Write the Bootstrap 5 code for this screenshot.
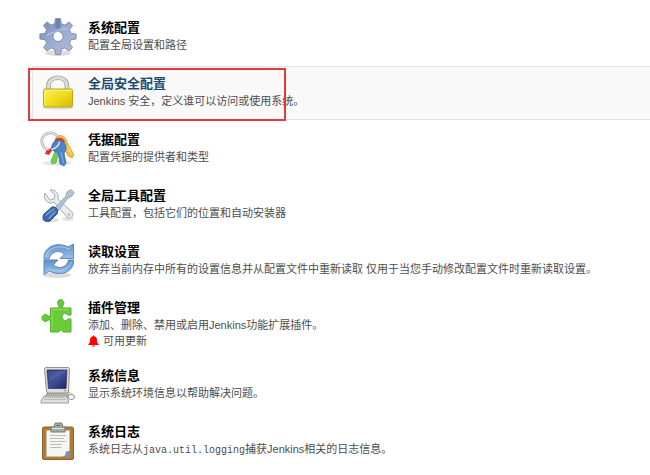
<!DOCTYPE html>
<html lang="zh-CN">
<head>
<meta charset="utf-8">
<meta name="viewport" content="width=device-width, initial-scale=1">
<title>Jenkins 系统管理</title>
<link href="https://cdn.jsdelivr.net/npm/bootstrap@5.3.0/dist/css/bootstrap.min.css" rel="stylesheet">
<style>
body{font-family:"Liberation Sans","Noto Sans CJK SC",sans-serif;font-size:11px;line-height:16px;color:#4d4d4d;background:#fff;overflow-x:hidden}
.manage-list{padding:9px 0 0 32px}
.manage-item{gap:11px;margin:1px 0;padding:7px 6px 6px;border:1px solid transparent;border-right:0;color:inherit}
.manage-item.is-current{background:#f9f9f9;border-color:#e3e3e3}
.manage-icon{width:38px;height:39px}
.manage-text{padding-top:1px}
.manage-title{font-size:13px;line-height:18px;color:#000}
.is-current .manage-title{color:#204a74}
.manage-text code{font-family:"Liberation Mono",monospace;font-size:10px;line-height:12px;color:inherit}
.bell{width:11px;height:12px}
.update-note{gap:4px}
.highlight-frame{left:-5px;top:1px;width:258px;height:53px;border:2px solid #e23b3b;pointer-events:none}
</style>
<script src="https://cdn.jsdelivr.net/npm/bootstrap@5.3.0/dist/js/bootstrap.bundle.min.js"></script>
</head>
<body>
<main class="manage-list d-flex flex-column">

<a href="#configure" class="manage-item d-flex align-items-start text-decoration-none">
<svg class="manage-icon flex-shrink-0" viewBox="0 0 38 39" aria-hidden="true">
<defs><linearGradient id="gearFill" x1="0" y1="0" x2="1" y2="1"><stop offset="0" stop-color="#7088b4"/><stop offset=".5" stop-color="#9eacd3"/><stop offset="1" stop-color="#b4bad9"/></linearGradient></defs>
<ellipse cx="19" cy="35" rx="13" ry="3" fill="#ddd"/>
<path transform="translate(19 18.5)" fill="url(#gearFill)" fill-rule="evenodd" stroke="#7f89a8" stroke-width=".9" stroke-linejoin="round" d="M-3.2-12.9-2.5-18.1H2.5L3.2-12.9 6.9-11.4 11-14.6 14.6-11 11.4-6.9 12.9-3.2 18.1-2.5V2.5L12.9 3.2 11.4 6.9 14.6 11 11 14.6 6.9 11.4 3.2 12.9 2.5 18.1H-2.5L-3.2 12.9-6.9 11.4-11 14.6-14.6 11-11.4 6.9-12.9 3.2-18.1 2.5V-2.5L-12.9-3.2-11.4-6.9-14.6-11-11-14.6-6.9-11.4ZM0-5A5 5 0 1 0 0 5 5 5 0 1 0 0-5Z"/>
<path d="M17 1h4l1 9c-2 1-4 1-6 0z" fill="#56739f" opacity=".6"/>
<path d="M8 18c3-5 7-2 11-5s7-3 10-1" fill="none" stroke="#c6cee9" stroke-width="1.5" opacity=".6"/>
</svg>
<div class="manage-text"><div class="manage-title fw-bold">系统配置</div><div>配置全局设置和路径</div></div>
</a>

<a href="#security" class="manage-item is-current position-relative d-flex align-items-start text-decoration-none">
<svg class="manage-icon flex-shrink-0" viewBox="0 0 38 39" aria-hidden="true">
<defs><linearGradient id="lockFill" x1="0" y1="0" x2="1" y2="1"><stop offset="0" stop-color="#f8ee58"/><stop offset=".5" stop-color="#f0dc1d"/><stop offset="1" stop-color="#d6b800"/></linearGradient></defs>
<ellipse cx="19" cy="33.5" rx="15" ry="2" fill="#ddd"/>
<path d="M9.5 18V12C9.5 1 28 1 28 12v6" fill="none" stroke="#9b9e9b" stroke-width="4.600"/>
<path d="M9.5 18V12C9.5 1 28 1 28 12v6" fill="none" stroke="#dcdedc" stroke-width="2.800"/>
<rect x="4.500" y="15" width="29" height="18" rx="1.5" fill="url(#lockFill)" stroke="#bda51c"/>
<path d="M6 31.5V16.5h26" fill="none" stroke="#fff27a"/>
</svg>
<div class="manage-text"><div class="manage-title fw-bold">全局安全配置</div><div>Jenkins 安全，定义谁可以访问或使用系统。</div></div>
<span class="highlight-frame position-absolute"></span>
</a>

<a href="#credentials" class="manage-item d-flex align-items-start text-decoration-none">
<svg class="manage-icon flex-shrink-0" viewBox="0 0 38 39" aria-hidden="true">
<ellipse cx="18" cy="33" rx="14" ry="2.5" fill="#e6e6e6"/>
<circle cx="11.5" cy="11.5" r="8.7" fill="none" stroke="#a1a5a6" stroke-width="2.8"/>
<circle cx="11.5" cy="11.5" r="8.7" fill="none" stroke="#e3e5e6" stroke-width="1.5"/>
<path d="M16 9c3-6 11-4 12 3l7 13-2 3-4-2-7-12z" fill="#edc04a" stroke="#cfa03a" stroke-width=".7"/>
<path d="M15 12c1-5 9-6 11 0l-4 4-6 1-4 5-2 3-4-1 1-3 4-2z" fill="#d93630"/>
<path d="M15 14c2-5 10-4 10 1l-6 10-2 8-4 1-1-3 4-10z" fill="#74cc48" stroke="#5aaa42" stroke-width=".7"/>
<path d="M13 16c0-5 7-7 11-4 4 2 4 8 1 11l2 10-2 3-4-2-2-12c-3 1-6-2-6-6z" fill="#4b83c9" stroke="#3c6faf" stroke-width=".8"/>
<path d="M22 22l2.5 11" stroke="#8ab7e9"/><path d="M28 16l5 9" stroke="#ffe28b"/>
<path d="M12 19.5c5-1 8-4 8.5-8" fill="none" stroke="#e4e7e9" stroke-width="1.5"/>
</svg>
<div class="manage-text"><div class="manage-title fw-bold">凭据配置</div><div>配置凭据的提供者和类型</div></div>
</a>

<a href="#tools" class="manage-item d-flex align-items-start text-decoration-none">
<svg class="manage-icon flex-shrink-0" viewBox="0 0 38 39" aria-hidden="true">
<ellipse cx="11" cy="34" rx="9" ry="2" fill="#ddd"/><ellipse cx="29" cy="33" rx="6" ry="2" fill="#e4e4e4"/>
<path d="M6 7c-2 5 1 10 6 10l3-1 13 15c3 3 8-1 5-5L19 13c1-5-2-10-8-9l5 5-1 4-4 1z" fill="#e9eaea" stroke="#a9adae" stroke-width="1" stroke-linejoin="round"/>
<circle cx="30" cy="28.5" r="1.3" fill="#bbb"/>
<path d="M16 22 27 10l1-4 4-2.500 3 3L33 10l-4 2L19 25z" fill="#b0c3d6" stroke="#8b9fb4" stroke-width=".9" stroke-linejoin="round"/>
<path d="M5 28 13 21c4-1 7 3 5 7l-7 7c-5 2-9-2-6-7z" fill="#3a69ac" stroke="#2a5190"/>
<path d="M7 29l8-6M10 32l6-6" stroke="#7fa8dc" stroke-width="1.3" stroke-linecap="round"/>
</svg>
<div class="manage-text"><div class="manage-title fw-bold">全局工具配置</div><div>工具配置，包括它们的位置和自动安装器</div></div>
</a>

<a href="#reload" class="manage-item d-flex align-items-start text-decoration-none">
<svg class="manage-icon flex-shrink-0" viewBox="0 0 38 39" aria-hidden="true">
<defs><linearGradient id="arrowFill" x1="0" y1="0" x2="0" y2="1"><stop offset="0" stop-color="#5f92cd"/><stop offset="1" stop-color="#9bc1e8"/></linearGradient></defs>
<ellipse cx="18" cy="33" rx="14" ry="3" fill="#ddd"/>
<path d="M5 17C4 5 18-1 29 5l5.500-3v14.500H21l4.500-4.500C19 7 12 10 10 17z" fill="url(#arrowFill)" stroke="#5381b5" stroke-width=".9" stroke-linejoin="round"/>
<path d="M34.500 18c1 12-13 17-24 11L5 32.500V18h14l-5 5c7 5 14 2 15.500-5z" fill="url(#arrowFill)" stroke="#5381b5" stroke-width=".9" stroke-linejoin="round"/>
<path d="M6.500 14.500C9 6 20 2 30 7l2.500-2M32.500 20c-2 7-13 12-22 7L7 29.5" fill="none" stroke="#b8d5f2" stroke-width=".8"/>
</svg>
<div class="manage-text"><div class="manage-title fw-bold">读取设置</div><div>放弃当前内存中所有的设置信息并从配置文件中重新读取 仅用于当您手动修改配置文件时重新读取设置。</div></div>
</a>

<a href="#plugins" class="manage-item d-flex align-items-start text-decoration-none">
<svg class="manage-icon flex-shrink-0" viewBox="0 0 38 39" aria-hidden="true">
<path d="M11.500 10h8.500V8c-3-3-1-6.500 1.500-6.500s5 3.500 2 6.500v2H32v7h-3c-3-3-6-1-6 2s4 5 6 2h3v13h-8c0-2.500-4-2.500-4 0h-8.500V22H9c-2 3-6 1-6-2s4-5 6-2h2.500z" fill="#68cc35" stroke="#5aab38" stroke-width="1" stroke-linejoin="round"/>
<path d="M13 32V11.500h17" fill="none" stroke="#8edc60"/>
</svg>
<div class="manage-text"><div class="manage-title fw-bold">插件管理</div><div>添加、删除、禁用或启用Jenkins功能扩展插件。</div>
<div class="update-note d-flex align-items-center"><svg class="bell flex-shrink-0" viewBox="0 0 11 12" aria-hidden="true"><path d="M5.500.5a1 1 0 0 1 1 1C8.500 2 9 3.500 9 5.500c0 2 .7 2.800 1.500 3.600.4.5 0 1-.5 1H1c-.5 0-.9-.5-.5-1C1.300 8.300 2 7.500 2 5.500c0-2 .5-3.500 2.500-4a1 1 0 0 1 1-1zM4 10.500h3a1.500 1.300 0 0 1-3 0z" fill="#f00"/></svg><span>可用更新</span></div></div>
</a>

<a href="#info" class="manage-item d-flex align-items-start text-decoration-none">
<svg class="manage-icon flex-shrink-0" viewBox="0 0 38 39" aria-hidden="true">
<defs><linearGradient id="screenFill" x1="0" y1="0" x2="1" y2="1"><stop offset="0" stop-color="#202b70"/><stop offset=".5" stop-color="#414f9b"/><stop offset="1" stop-color="#18235e"/></linearGradient></defs>
<path d="M9 26h19l3 5H6z" fill="#b1b2ab" stroke="#8b8c86"/>
<path d="M7 1.500h22q1.500 0 1.500 2L29.500 25q0 2-2 2H9.500q-2 0-2-2L5.500 3.500q0-2 1.500-2z" fill="#dddeda" stroke="#90928c"/>
<path d="M8 4h20l-1 18.500H9.500z" fill="url(#screenFill)" stroke="#333869" stroke-width=".8"/>
<path d="M9 5h18L10 16z" fill="#8492c5" opacity=".3"/><path d="M25 24.700h2" stroke="#6aab3b"/>
<path d="M5 30h22l2.500 5v2H2v-2z" fill="#dfe0dc" stroke="#9c9e98"/>
<path d="M6 31.500h20M5 33.500h22" stroke="#a6a9a3" stroke-dasharray="1.5 .7"/>
<path d="M27 29c1-3 5-4 6 0" fill="none" stroke="#b5b5b5"/><rect x="29" y="28.5" width="6.5" height="5" rx="2.5" fill="#eee" stroke="#999"/>
</svg>
<div class="manage-text"><div class="manage-title fw-bold">系统信息</div><div>显示系统环境信息以帮助解决问题。</div></div>
</a>

<a href="#log" class="manage-item d-flex align-items-start text-decoration-none">
<svg class="manage-icon flex-shrink-0" viewBox="0 0 38 39" aria-hidden="true">
<rect x="3.500" y="5" width="31" height="32.500" rx="1.5" fill="#b37a33" stroke="#906027"/>
<path d="M7.500 8.500h23V30l-5 4.500h-18z" fill="#f5f5f3" stroke="#c4c4bf" stroke-width=".8"/>
<path d="M31 29v6h-7c3-1 3-3 3-5z" fill="#8393ac" stroke="#7c889f" stroke-width=".7"/>
<path d="M11 13.500h16M11 16.500h14M11 19.500h16M11 22.500h12M11 25.500h11" stroke="#bbbdbc"/>
<path d="M12 5h3.500V2.500q0-1.500 1.500-1.500h5q1.500 0 1.500 1.500V5H26v5H12z" fill="#a6aaa4" stroke="#787c75"/>
<path d="M13 6.500h12" stroke="#e1e4df"/><path d="M17.500 3.500h4" stroke="#686b64"/>
</svg>
<div class="manage-text"><div class="manage-title fw-bold">系统日志</div><div>系统日志从<code>java.util.logging</code>捕获Jenkins相关的日志信息。</div></div>
</a>

</main>
</body>
</html>
